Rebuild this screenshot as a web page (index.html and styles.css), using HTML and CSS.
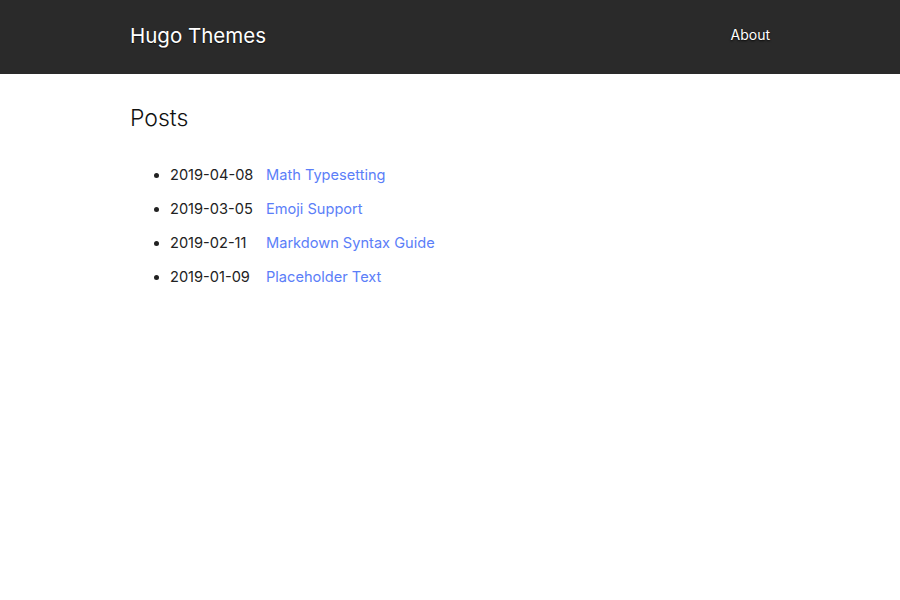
FILE: index.html
```html
<!DOCTYPE html>
<html lang="en">
<head>
<meta charset="utf-8">
<title>Hugo Themes</title>
<link rel="stylesheet" href="styles.css">
</head>
<body>
<header class="site-header">
  <div class="container header-inner">
    <a class="site-title" href="#">Hugo Themes</a>
    <nav class="site-nav"><a href="#">About</a></nav>
  </div>
</header>
<main class="container">
  <h1 class="page-title">Posts</h1>
  <ul class="post-list">
    <li><span class="date">2019-04-08</span><a href="#">Math Typesetting</a></li>
    <li><span class="date">2019-03-05</span><a href="#">Emoji Support</a></li>
    <li><span class="date">2019-02-11</span><a href="#">Markdown Syntax Guide</a></li>
    <li><span class="date">2019-01-09</span><a href="#">Placeholder Text</a></li>
  </ul>
</main>
</body>
</html>
```
FILE: styles.css
```css
html, body {
  margin: 0;
  padding: 0;
  background: #fff;
  font-family: Inter, "Noto Sans", sans-serif;
  color: #222;
}
.container {
  max-width: 640px;
  margin: 0 auto;
}
.site-header {
  background: #2a2a2a;
  height: 74px;
}
.header-inner {
  display: flex;
  align-items: center;
  justify-content: space-between;
  height: 100%;
}
.site-title {
  color: #fff;
  font-size: 20.5px;
  text-decoration: none;
  text-shadow: 0 1px 1px rgba(0,0,0,0.6);
  margin-bottom: 4px;
}
.site-nav a {
  color: #fff;
  font-size: 14px;
  text-decoration: none;
  text-shadow: 0 1px 2px rgba(0,0,0,0.9);
}
.site-nav {
  margin-bottom: 6px;
}
.page-title {
  font-size: 23px;
  font-weight: 300;
  margin: 30px 0 33px;
  color: #111;
}
.post-list {
  margin: 0;
  padding-left: 40px;
  font-size: 14.6px;
}
.post-list li {
  line-height: 20px;
  margin-bottom: 14px;
}
.date {
  display: inline-block;
  width: 96px;
  color: #222;
}
.post-list a {
  color: #5b7ef8;
  text-decoration: none;
}
```
